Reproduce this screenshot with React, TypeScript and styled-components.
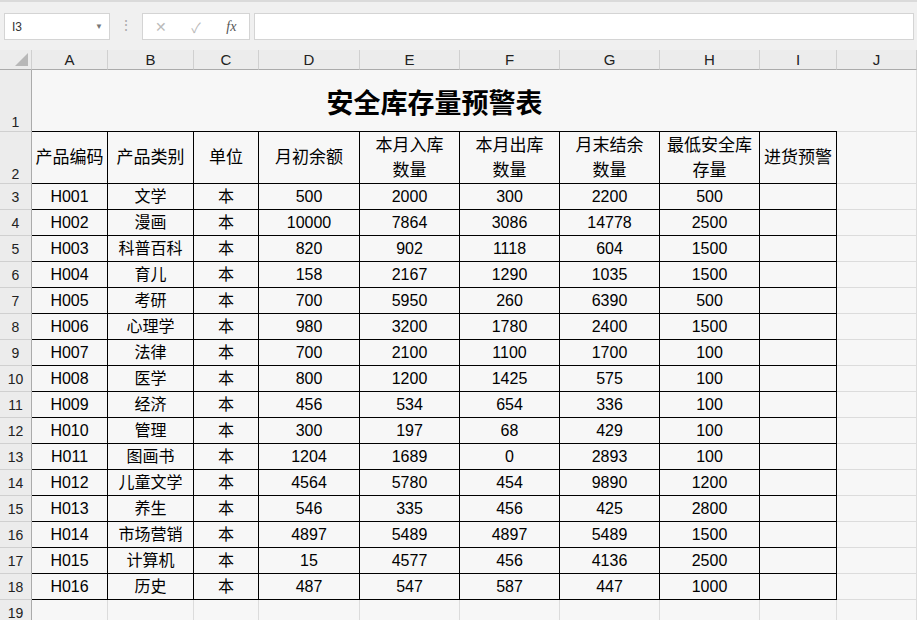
import React from "react";
import styled, { createGlobalStyle } from "styled-components";

const Global = createGlobalStyle`
  body { margin: 0; background: #f7f7f7; font-family: "Liberation Sans", "Noto Sans CJK SC", sans-serif; }
`;

const cols = [76, 86, 65, 101, 100, 100, 100, 100, 77, 80];
const letters = ["A", "B", "C", "D", "E", "F", "G", "H", "I", "J"];
const heads = ["产品编码", "产品类别", "单位", "月初余额", "本月入库\n数量", "本月出库\n数量", "月末结余\n数量", "最低安全库\n存量", "进货预警"];
const data: (string | number)[][] = [
  ["文学", 500, 2000, 300, 2200, 500],
  ["漫画", 10000, 7864, 3086, 14778, 2500],
  ["科普百科", 820, 902, 1118, 604, 1500],
  ["育儿", 158, 2167, 1290, 1035, 1500],
  ["考研", 700, 5950, 260, 6390, 500],
  ["心理学", 980, 3200, 1780, 2400, 1500],
  ["法律", 700, 2100, 1100, 1700, 100],
  ["医学", 800, 1200, 1425, 575, 100],
  ["经济", 456, 534, 654, 336, 100],
  ["管理", 300, 197, 68, 429, 100],
  ["图画书", 1204, 1689, 0, 2893, 100],
  ["儿童文学", 4564, 5780, 454, 9890, 1200],
  ["养生", 546, 335, 456, 425, 2800],
  ["市场营销", 4897, 5489, 4897, 5489, 1500],
  ["计算机", 15, 4577, 456, 4136, 2500],
  ["历史", 487, 547, 587, 447, 1000],
];

const Toolbar = styled.div`
  height: 50px; box-sizing: border-box; background: #f0f0f0;
  border-top: 2px solid #dadada; padding: 11px 3px 0 4px;
  display: flex; gap: 4px; align-items: flex-start;
`;
const Box = styled.div<{ $w?: number }>`
  height: 27px; box-sizing: border-box; background: #fff; border: 1px solid #d4d4d4;
  ${(p) => (p.$w ? `width: ${p.$w}px;` : "flex: 1;")}
  display: flex; align-items: center; font-size: 12px; color: #333;
`;
const NameText = styled.span` flex: 1; padding-left: 7px; `;
const Caret = styled.span` font-size: 8px; color: #777; margin-right: 6px; `;
const Dots = styled.span` width: 24px; color: #aaa; font-size: 14px; text-align: center; padding-top: 4px; `;
const Icon = styled.span<{ $c?: string }>` width: 36px; text-align: center; color: ${(p) => p.$c || "#bbb"}; font-size: 14px; `;

const Grid = styled.div`
  display: grid;
  grid-template-columns: 32px ${cols.map((c) => c + "px").join(" ")};
  grid-template-rows: 20px 62px 52px repeat(16, 26px) 26px;
  height: 570px; overflow: hidden;
`;
const ColHead = styled.div`
  background: #ececec; border-right: 1px solid #d0d0d0; border-bottom: 1px solid #ababab;
  display: flex; align-items: center; justify-content: center; font-size: 15px; color: #222;
  position: relative;
`;
const RowHead = styled.div<{ $top?: boolean }>`
  background: #ececec; border-right: 1px solid #ababab; border-bottom: 1px solid #d0d0d0;
  display: flex; align-items: ${(p) => (p.$top ? "flex-end" : "center")}; justify-content: center;
  font-size: 14px; color: #222; padding-bottom: ${(p) => (p.$top ? "1px" : "0")};
`;
const Corner = styled.div`
  position: absolute; right: 3px; bottom: 3px; width: 0; height: 0;
  border-left: 13px solid transparent; border-bottom: 13px solid #b8b8b8;
`;
const Title = styled.div`
  grid-column: 2 / span 9; display: flex; align-items: center; justify-content: center;
  font-size: 27px; font-weight: bold; border-bottom: 1px solid #000; padding-top: 2px;
  font-family: "Noto Sans CJK SC", sans-serif;
`;
const Cell = styled.div<{ $head?: boolean }>`
  box-sizing: border-box; display: flex; align-items: center; justify-content: center; text-align: center;
  font-size: ${(p) => (p.$head ? "17px" : "16px")}; line-height: 25px; color: #000; white-space: pre-line;
  font-family: "Liberation Sans", "Noto Sans CJK SC", sans-serif;
  border-right: 1px solid #000; border-bottom: 1px solid #000;
`;
const Blank = styled.div` border-right: 1px solid #dcdcdc; border-bottom: 1px solid #dcdcdc; `;

export default function App() {
  return (
    <>
      <Global />
      <Toolbar>
        <Box $w={106}><NameText>I3</NameText><Caret>▼</Caret></Box>
        <Dots>⋮</Dots>
        <Box $w={108}><Icon>✕</Icon><Icon>✓</Icon><Icon $c="#555"><i style={{ fontFamily: "Liberation Serif" }}>fx</i></Icon></Box>
        <Box />
      </Toolbar>
      <Grid>
        <ColHead><Corner /></ColHead>
        {letters.map((l) => <ColHead key={l}>{l}</ColHead>)}
        <RowHead $top>1</RowHead>
        <Title>安全库存量预警表</Title>
        <Blank />
        <RowHead $top>2</RowHead>
        {heads.map((h) => <Cell key={h} $head>{h}</Cell>)}
        <Blank />
        {data.map((r, i) => {
          const code = "H" + String(i + 1).padStart(3, "0");
          const vals = [code, r[0], "本", ...r.slice(1), ""];
          return (
            <React.Fragment key={code}>
              <RowHead>{i + 3}</RowHead>
              {vals.map((v, j) => <Cell key={j}>{v}</Cell>)}
              <Blank />
            </React.Fragment>
          );
        })}
        <RowHead>19</RowHead>
        {letters.map((l) => <Blank key={l} />)}
      </Grid>
    </>
  );
}
